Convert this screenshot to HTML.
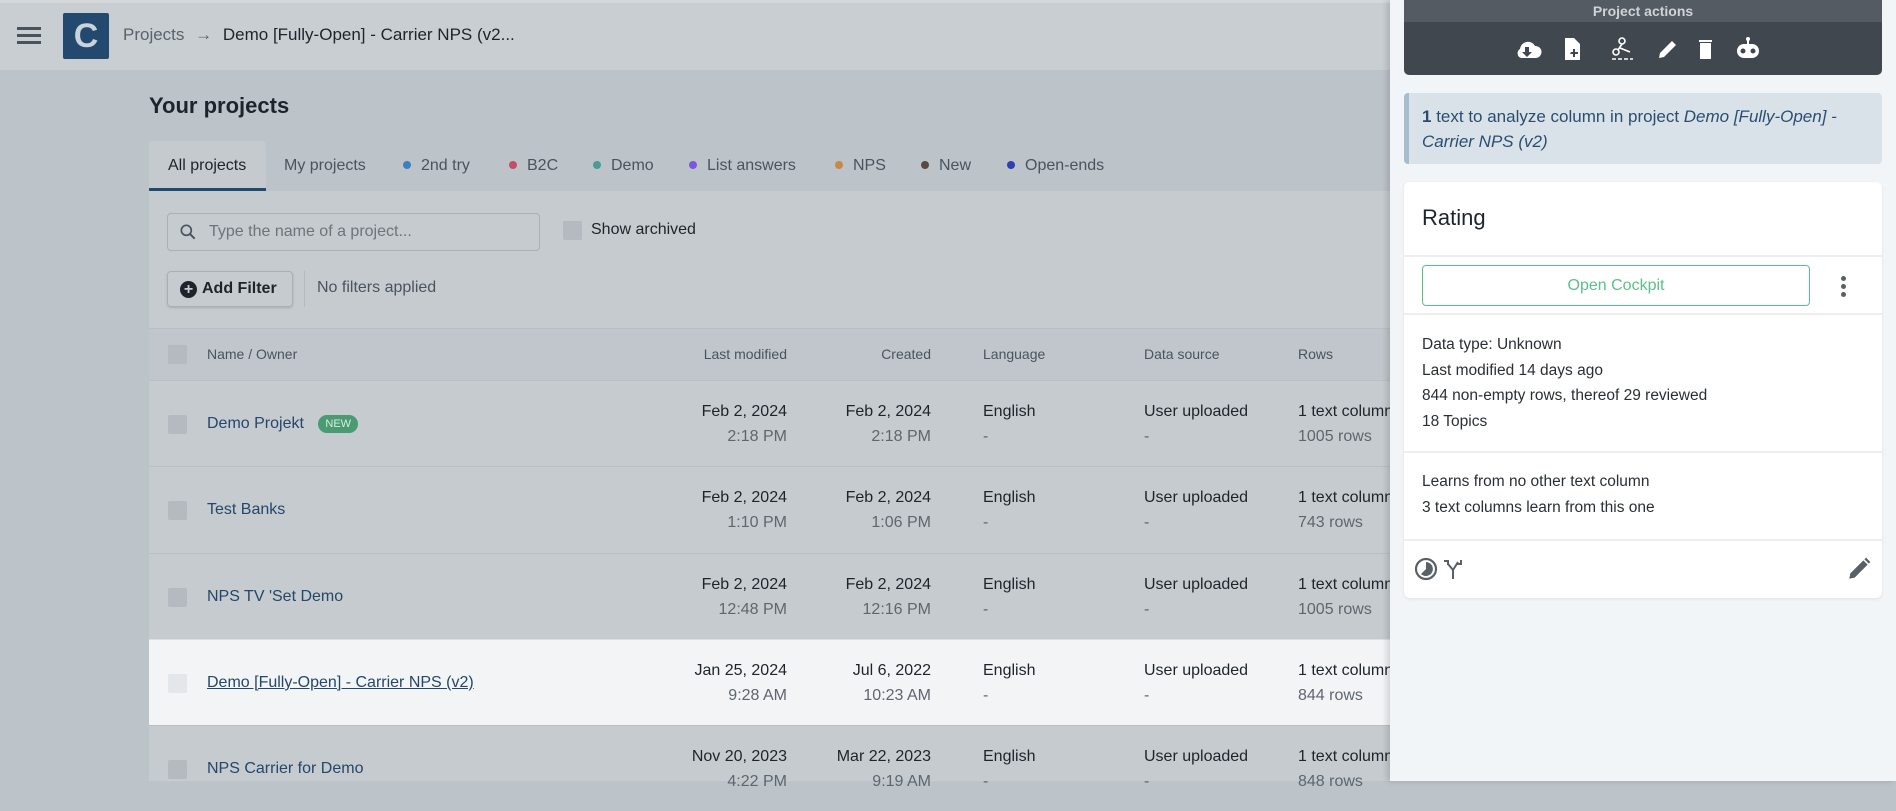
<!DOCTYPE html>
<html><head><meta charset="utf-8"><style>
*{box-sizing:border-box;margin:0;padding:0}
body{width:1896px;height:781px;overflow:hidden;position:relative;background:#bcc3c9;font-family:"Liberation Sans",sans-serif;color:#1d242b}
.a{position:absolute}
.hdr{left:0;top:0;width:1390px;height:70px;background:#c9ced2;border-top:3px solid #d4d8db}
.main{left:149px;top:191px;width:1241px;height:590px;background:#c6cbcf}
.tab{top:141px;height:50px;line-height:50px;font-size:16px;color:#4a545e}
.dot{display:inline-block;width:8px;height:8px;border-radius:50%;margin-right:10px;vertical-align:middle;position:relative;top:-1px}
.cb{width:19px;height:19px;background:#b4bac0;border-radius:2px}
.row{left:149px;width:1241px;height:86px;border-top:1px solid #b9bfc4}
.nm{font-size:16px;color:#24476a;left:58px;top:34px;white-space:nowrap}
.r{text-align:right;font-size:16px;line-height:25px}
.l{font-size:16px;line-height:25px}
.g{color:#5e666e}
.pnl{left:1390px;top:0;width:506px;height:781px;background:#f2f5f8;box-shadow:-3px 0 6px rgba(0,0,0,.15)}
.ptxt{font-size:15.5px;color:#2a2f35;line-height:25.5px}
.dv{height:2px;background:#eceef0;left:0;width:478px}
</style></head><body>
<div class="a hdr">
 <div class="a" style="left:17px;top:24px;width:24px;height:3px;background:#4a535c;box-shadow:0 7px 0 #4a535c,0 14px 0 #4a535c"></div>
 <div class="a" style="left:63px;top:10px;width:46px;height:46px;background:#24496e;border-radius:2px;color:#c9d3dc;font-weight:bold;font-size:34px;line-height:46px;text-align:center">C</div>
 <div class="a" style="left:123px;top:22px;font-size:17px;color:#5a636c">Projects <span style="margin:0 6px;color:#5a636c">→</span> <span style="color:#1d242b">Demo [Fully-Open] - Carrier NPS (v2...</span></div>
</div>
<div class="a" style="left:149px;top:93px;font-size:22px;font-weight:bold;color:#1d242b">Your projects</div>
<div class="a" style="left:149px;top:141px;width:117px;height:50px;background:#c5cacf;border-radius:4px 4px 0 0;border-bottom:3px solid #24496e"></div>
<div class="a tab" style="left:168px;color:#1d242b">All projects</div>
<div class="a tab" style="left:284px">My projects</div>
<div class="a tab" style="left:403px"><span class="dot" style="background:#3f7fc0"></span>2nd try</div>
<div class="a tab" style="left:509px"><span class="dot" style="background:#c05068"></span>B2C</div>
<div class="a tab" style="left:593px"><span class="dot" style="background:#4b9a98"></span>Demo</div>
<div class="a tab" style="left:689px"><span class="dot" style="background:#7a58d8"></span>List answers</div>
<div class="a tab" style="left:835px"><span class="dot" style="background:#c48a48"></span>NPS</div>
<div class="a tab" style="left:921px"><span class="dot" style="background:#5a4a44"></span>New</div>
<div class="a tab" style="left:1007px"><span class="dot" style="background:#3040b0"></span>Open-ends</div>
<div class="a main">
 <div class="a" style="left:18px;top:22px;width:373px;height:38px;border:1px solid #a9b1b8;border-radius:4px">
  <svg class="a" style="left:10px;top:8px" width="20" height="20" viewBox="0 0 24 24"><circle cx="10" cy="10" r="6" fill="none" stroke="#4a535c" stroke-width="2"/><path d="M14.5 14.5L20 20" stroke="#4a535c" stroke-width="2.4"/></svg>
  <div class="a" style="left:41px;top:9px;font-size:16px;color:#6c747c">Type the name of a project...</div>
 </div>
 <div class="a cb" style="left:414px;top:30px"></div>
 <div class="a" style="left:442px;top:30px;font-size:16px;color:#1d242b">Show archived</div>
 <div class="a" style="left:18px;top:80px;width:126px;height:36px;border:1px solid #a9b1b8;border-radius:4px;box-shadow:0 1px 2px rgba(0,0,0,.15)">
  <div class="a" style="left:12px;top:9px;width:17px;height:17px;border-radius:50%;background:#1d242b;color:#c6cbcf;font-size:16px;line-height:17px;text-align:center;font-weight:bold">+</div>
  <div class="a" style="left:34px;top:8px;font-size:16px;font-weight:bold;color:#1d242b;white-space:nowrap">Add Filter</div>
 </div>
 <div class="a" style="left:155px;top:80px;width:1px;height:36px;background:#b3bac0"></div>
 <div class="a" style="left:168px;top:88px;font-size:16px;color:#4a545e">No filters applied</div>
</div>
<div class="a" style="left:149px;top:328px;width:1241px;height:52px;background:#c0c6cb;border-top:1px solid #b9bfc4"></div>
<div class="a cb" style="left:168px;top:345px"></div>
<div class="a" style="left:207px;top:346px;font-size:14px;color:#4a545e">Name / Owner</div>
<div class="a" style="left:650px;top:346px;width:137px;text-align:right;font-size:14px;color:#4a545e">Last modified</div>
<div class="a" style="left:800px;top:346px;width:131px;text-align:right;font-size:14px;color:#4a545e">Created</div>
<div class="a" style="left:983px;top:346px;font-size:14px;color:#4a545e">Language</div>
<div class="a" style="left:1144px;top:346px;font-size:14px;color:#4a545e">Data source</div>
<div class="a" style="left:1298px;top:346px;font-size:14px;color:#4a545e">Rows</div>

<div class="a row" style="top:380px"><div class="a cb" style="left:19px;top:34px"></div><div class="a nm">Demo Projekt <span style="display:inline-block;background:#4a9a72;color:#d8eee0;font-size:11px;padding:3px 7px;border-radius:10px;margin-left:10px;vertical-align:middle">NEW</span></div>
<div class="a r" style="left:338px;top:18px;width:300px">Feb 2, 2024<br><span class="g">2:18 PM</span></div><div class="a r" style="left:482px;top:18px;width:300px">Feb 2, 2024<br><span class="g">2:18 PM</span></div><div class="a l" style="left:834px;top:18px">English<br><span class="g">-</span></div><div class="a l" style="left:995px;top:18px">User uploaded<br><span class="g">-</span></div><div class="a l" style="left:1149px;top:18px;white-space:nowrap">1 text column<br><span class="g">1005 rows</span></div></div>
<div class="a row" style="top:466px"><div class="a cb" style="left:19px;top:34px"></div><div class="a nm">Test Banks</div>
<div class="a r" style="left:338px;top:18px;width:300px">Feb 2, 2024<br><span class="g">1:10 PM</span></div><div class="a r" style="left:482px;top:18px;width:300px">Feb 2, 2024<br><span class="g">1:06 PM</span></div><div class="a l" style="left:834px;top:18px">English<br><span class="g">-</span></div><div class="a l" style="left:995px;top:18px">User uploaded<br><span class="g">-</span></div><div class="a l" style="left:1149px;top:18px;white-space:nowrap">1 text column<br><span class="g">743 rows</span></div></div>
<div class="a row" style="top:553px"><div class="a cb" style="left:19px;top:34px"></div><div class="a nm">NPS TV 'Set Demo</div>
<div class="a r" style="left:338px;top:18px;width:300px">Feb 2, 2024<br><span class="g">12:48 PM</span></div><div class="a r" style="left:482px;top:18px;width:300px">Feb 2, 2024<br><span class="g">12:16 PM</span></div><div class="a l" style="left:834px;top:18px">English<br><span class="g">-</span></div><div class="a l" style="left:995px;top:18px">User uploaded<br><span class="g">-</span></div><div class="a l" style="left:1149px;top:18px;white-space:nowrap">1 text column<br><span class="g">1005 rows</span></div></div>
<div class="a row" style="top:639px;background:#f3f4f6;border-top:1px solid #dde0e3"><div class="a cb" style="left:19px;top:34px;background:#e4e7ea"></div><div class="a nm" style="text-decoration:underline">Demo [Fully-Open] - Carrier NPS (v2)</div>
<div class="a r" style="left:338px;top:18px;width:300px">Jan 25, 2024<br><span class="g">9:28 AM</span></div><div class="a r" style="left:482px;top:18px;width:300px">Jul 6, 2022<br><span class="g">10:23 AM</span></div><div class="a l" style="left:834px;top:18px">English<br><span class="g">-</span></div><div class="a l" style="left:995px;top:18px">User uploaded<br><span class="g">-</span></div><div class="a l" style="left:1149px;top:18px;white-space:nowrap">1 text column<br><span class="g">844 rows</span></div></div>
<div class="a row" style="top:725px"><div class="a cb" style="left:19px;top:34px"></div><div class="a nm">NPS Carrier for Demo</div>
<div class="a r" style="left:338px;top:18px;width:300px">Nov 20, 2023<br><span class="g">4:22 PM</span></div><div class="a r" style="left:482px;top:18px;width:300px">Mar 22, 2023<br><span class="g">9:19 AM</span></div><div class="a l" style="left:834px;top:18px">English<br><span class="g">-</span></div><div class="a l" style="left:995px;top:18px">User uploaded<br><span class="g">-</span></div><div class="a l" style="left:1149px;top:18px;white-space:nowrap">1 text column<br><span class="g">848 rows</span></div></div>

<div class="a pnl">
 <div class="a" style="left:14px;top:0;width:478px;height:75px;background:#41474f;border-radius:0 0 5px 5px;overflow:hidden">
  <div style="height:22px;background:#555b63;color:#cfd3d7;font-size:14px;font-weight:bold;text-align:center;line-height:22px">Project actions</div>
  <svg class="a" style="left:0;top:22px" width="478" height="53" viewBox="0 0 478 53" fill="#fff">
   <path d="M116 27a8 8 0 0 1 15-3 6 6 0 0 1 1 12h-15a5 5 0 0 1-1-9z"/><path d="M121 25h4v5h3l-5 5-5-5h3z" fill="#41474f"/>
   <path d="M161 16h9l6 6v16h-15z"/><path d="M167 30h2v-3h2v3h3v2h-3v3h-2v-3h-3z" fill="#41474f"/>
   <circle cx="218" cy="19" r="3" fill="none" stroke="#fff" stroke-width="1.6"/><circle cx="212" cy="30" r="3" fill="none" stroke="#fff" stroke-width="1.6"/><path d="M218 22l-4 6M216 26l10 4M208 37h4M214 37h4M220 37h4M226 37h3" stroke="#fff" stroke-width="1.6"/>
   <path d="M255 36l1-5 12-12 4 4-12 12z"/>
   <path d="M295 18h13v2h-13zM296 21h11v16h-11z"/>
   <circle cx="344" cy="17" r="2"/><path d="M343 18h2v4h-2z"/><rect x="333" y="22" width="22" height="14" rx="7"/><circle cx="339" cy="29" r="2.5" fill="#41474f"/><circle cx="349" cy="29" r="2.5" fill="#41474f"/>
  </svg>
 </div>
 <div class="a" style="left:14px;top:93px;width:478px;height:71px;background:#d9e2e9;border-left:5px solid #a8bccb;border-radius:4px;padding:11px 13px;font-size:17px;line-height:25px;color:#2c4d70"><b>1</b> text to analyze column in project <i>Demo [Fully-Open] - Carrier NPS (v2)</i></div>
 <div class="a" style="left:14px;top:182px;width:478px;height:416px;background:#fff;border-radius:6px;box-shadow:0 1px 3px rgba(0,0,0,.08)">
  <div class="a" style="left:18px;top:23px;font-size:22px;color:#1d242b">Rating</div>
  <div class="a dv" style="top:73px"></div>
  <div class="a" style="left:18px;top:83px;width:388px;height:41px;border:1px solid #5cc08a;border-radius:4px;text-align:center;line-height:39px;font-size:16px;color:#5cc08a">Open Cockpit</div>
  <div class="a" style="left:437px;top:94px;width:5px;height:5px;border-radius:50%;background:#5a6068;box-shadow:0 8px 0 #5a6068,0 16px 0 #5a6068"></div>
  <div class="a dv" style="top:131px"></div>
  <div class="a ptxt" style="left:18px;top:150px">Data type: Unknown<br>Last modified 14 days ago<br>844 non-empty rows, thereof 29 reviewed<br>18 Topics</div>
  <div class="a dv" style="top:269px"></div>
  <div class="a ptxt" style="left:18px;top:287px">Learns from no other text column<br>3 text columns learn from this one</div>
  <div class="a dv" style="top:357px"></div>
  <svg class="a" style="left:10px;top:374px" width="60" height="26" viewBox="0 0 60 26"><circle cx="12" cy="13" r="10" fill="none" stroke="#5a6068" stroke-width="2.2"/><path d="M12 6a7 7 0 1 1-5 12l5-5z" fill="#5a6068"/><path d="M34 8l5 6v9M44 6l-5 8M30 5h4v4M47 4v4h-4" stroke="#5a6068" stroke-width="2" fill="none"/></svg>
  <svg class="a" style="left:442px;top:374px" width="26" height="26" viewBox="0 0 24 24"><path d="M3 21l1-5 12-12 4 4-12 12zM17 3l4 4 1.5-1.5-4-4z" fill="#5a6068"/></svg>
 </div>
</div>
</body></html>
